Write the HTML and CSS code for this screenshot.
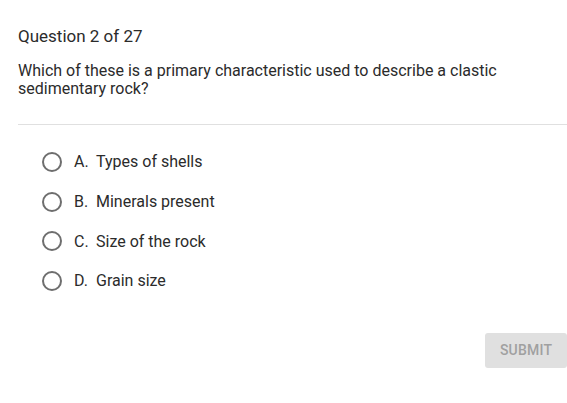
FILE: index.html
```html
<!DOCTYPE html>
<html>
<head>
<meta charset="utf-8">
<link rel="stylesheet" href="styles.css">
</head>
<body>
<div class="quiz">
  <div class="q-count">Question 2 of 27</div>
  <div class="q-text">Which of these is a primary characteristic used to describe a clastic sedimentary rock?</div>
  <div class="divider"></div>
  <ul class="options">
    <li class="option"><span class="radio"></span><span class="letter">A.</span><span class="label">Types of shells</span></li>
    <li class="option"><span class="radio"></span><span class="letter">B.</span><span class="label">Minerals present</span></li>
    <li class="option"><span class="radio"></span><span class="letter">C.</span><span class="label">Size of the rock</span></li>
    <li class="option"><span class="radio"></span><span class="letter">D.</span><span class="label">Grain size</span></li>
  </ul>
  <div class="actions"><button class="submit">SUBMIT</button></div>
</div>
</body>
</html>
```
FILE: styles.css
```css
html, body {
  margin: 0;
  padding: 0;
  background: #fff;
}
body {
  font-family: Roboto, "Liberation Sans", sans-serif;
  color: #2b2b2b;
}
.quiz {
  padding: 26px 0 0 18px;
}
.q-count {
  font-size: 17px;
  line-height: 20px;
}
.q-text {
  margin-top: 16px;
  font-size: 16px;
  line-height: 18px;
  padding-right: 60px;
}
.divider {
  margin-top: 26px;
  height: 1px;
  background: #e0e0e0;
}
.options {
  list-style: none;
  margin: 17px 0 0 0;
  padding: 0 0 0 24px;
}
.option {
  display: flex;
  align-items: center;
  height: 39.7px;
  font-size: 16px;
}
.radio {
  width: 16px;
  height: 16px;
  border: 2px solid #6e6e6e;
  border-radius: 50%;
  margin-right: 12px;
  flex: none;
}
.letter {
  width: 22px;
}
.actions {
  display: flex;
  justify-content: flex-end;
  margin-top: 32px;
}
.submit {
  font-family: Roboto, "Liberation Sans", sans-serif;
  font-size: 14px;
  font-weight: 500;
  color: #a0a0a0;
  background: #e0e0e0;
  border: none;
  border-radius: 3px;
  width: 82px;
  height: 35px;
  padding: 0;
  letter-spacing: 0.2px;
}
```
